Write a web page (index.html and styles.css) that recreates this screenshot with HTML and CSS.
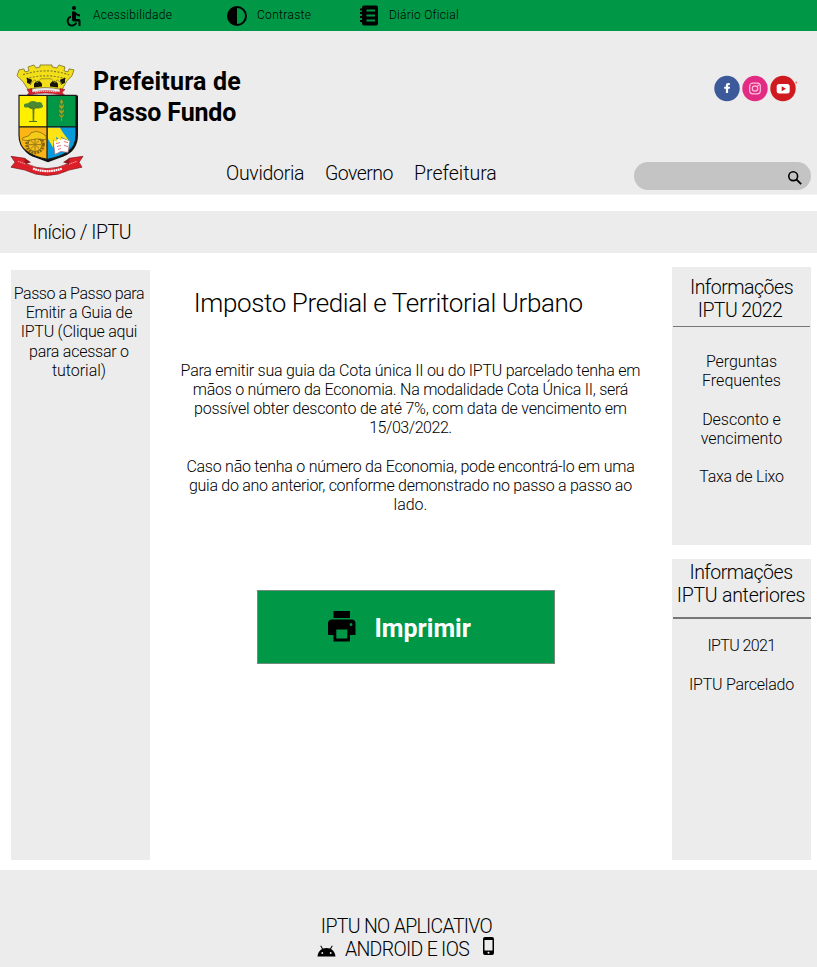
FILE: index.html
```
<!DOCTYPE html>
<html lang="pt-BR">
<head>
<meta charset="utf-8">
<title>IPTU - Prefeitura de Passo Fundo</title>
<link rel="stylesheet" href="styles.css">
</head>
<body>
<div class="topbar">
  <a class="tool tool-access"><svg width="22" height="22" viewBox="0 0 22 22"><circle cx="11" cy="3" r="2"/><path d="M9 6.500h3c1 1.500 2.500 2.800 5 2.900v2c-1.600 0-2.900-.5-4-1.300V14h2.500c1.400 0 2 .8 2 2v5h-2v-4.500H11a2 2 0 0 1-2-2z"/><path d="M8 11.700a4.500 4.500 0 1 0 5.300 6" fill="none" stroke="#000" stroke-width="1.900"/></svg><span>Acessibilidade</span></a>
  <a class="tool tool-contrast"><svg width="22" height="22" viewBox="0 0 22 22"><circle cx="11" cy="11" r="9" fill="none" stroke="#000" stroke-width="2"/><path d="M11 2a9 9 0 0 0 0 18z"/></svg><span>Contraste</span></a>
  <a class="tool tool-diary"><svg width="19" height="21" viewBox="0 0 19 21"><path d="M4 .5h12a2 2 0 0 1 2 2v16a2 2 0 0 1-2 2H4a2 2 0 0 1-2-2V17H0v-2h2v-2H0v-2h2V9H0V7h2V5.500H0v-2h2v-1a2 2 0 0 1 2-2z"/><path d="M6.500 5.500H15M6.500 10.500H15M6.500 15.500H15" stroke="#009846" stroke-width="2"/></svg><span>Diário Oficial</span></a>
</div>

<header class="header">
  <svg class="crest" width="74" height="112" viewBox="0 0 74 114" preserveAspectRatio="none">
    <path d="M9 6l5-1 1 3 4-1-1-4 6-2 2 3 4-1V1h12v2l5 1 2-3 6 2-1 4 4 1 1-3 5 1-2 6-5 5-5 9q-17-4-34 0l-5-8-6-6z" fill="#f2df19" stroke="#79711f" stroke-width=".8"/>
    <path d="M13 11q23-8 46 0M16 15q20-6 40 0" fill="none" stroke="#8a8124" stroke-width="1.200" stroke-dasharray="2 1.500"/>
    <path d="M17 14l5 2-1 5-4-2zM55 14l-5 2 1 5 4-2z" fill="#17150a"/><path d="M24 24v-4q4-6 8 0v3zM40 23v-3q4-6 8 0v4z" fill="#17150a"/><path d="M20 20l5-4 2 3 4-4h10l4 4 2-3 5 4" fill="none" stroke="#a3981e"/>
    <path d="M17 26l5-1v4q14-4 28 0v-4l5 1-3 3 3 3-7-1q-12-3-26 0l-5 1 2-3z" fill="#df202b" stroke="#7d171a" stroke-width=".5"/><path d="M25 28.500q11-2 22 0" stroke="#f8c6c4" fill="none" stroke-width="1.300" stroke-dasharray="1.500 .5"/>
    <path d="M10 32h58v40q0 16-14 22l-16 6-16-6Q10 88 10 72z" fill="#111"/>
    <path d="M9 32h28v32H9z" fill="#fff000"/><path d="M37 32h29v32H37z" fill="#009846"/><path d="M9 64h28v33q-12-2-20-8Q9 84 9 72z" fill="#fbb616"/><path d="M37 64h29v8q0 12-8 17-8 6-21 8z" fill="#079bdc"/>
    <path d="M9 32h57v40q0 12-8 17-8 6-20.500 8-12.500-2-20.500-8Q9 84 9 72zM37 32v65M9 64h57" fill="none" stroke="#191919" stroke-width="1.200"/>
    <path d="M14 43q-1-3 4-3 4-4 9-1 5-1 5 2 3 3-2 4-4 1-6-1-3 3-6 0-4 1-4-1z" fill="#4a8a32"/><path d="M22.500 43h2l-.3 15h-1.500z" fill="#5c7c28"/><path d="M18 43l5 3 6-3M19 58.500h8" stroke="#48702a" fill="none"/>
    <path d="M51.500 38v20" stroke="#9a9a25"/><path d="M51.500 35l2 4-2 2-2-2zM49 40l2.500 3 2.500-3v4l-2.500 2-2.500-2zM49 45l2.500 3 2.500-3v4l-2.500 2-2.500-2zM49 50l2.500 3 2.500-3v3l-2.500 2-2.500-2z" fill="#a0aa28" stroke="#3d6e22" stroke-width=".6"/>
    <circle cx="25" cy="82" r="8.500" fill="none" stroke="#80640e" stroke-width="2.600" stroke-dasharray="2 1"/><circle cx="25" cy="82" r="7" fill="#f0bd1c" stroke="#806313"/><path d="M19 82h12M25 76v12M21 78l8 8M29 78l-8 8" stroke="#a07c14"/><path d="M13 75l6-2 2-3q6-3 10 0l5 3v4q-10-2-19 1l-5-1z" fill="#f5cc18" stroke="#75600f" stroke-width=".7"/>
    <path d="M43 78l8-3 9 3-2 12-7-1-6 3z" fill="#fff" stroke="#a4626a" stroke-width=".7"/><path d="M46 81l4-1M47 84l4-1M48 87l3-1M54 79l4 1M54 83l4 1" stroke="#df7680"/><path d="M38 65h12l3 5 6 8-8-4 0 4-5-4 1 6-4-3 0 8-5-9z" fill="#fee417"/>
    <path d="M1 94l14 2v5q22 11 44 0v-5l14-2-4 6 3 5-13 3q-22 11-44 0l-14-3 4-5z" fill="#dd1f2a" stroke="#7e171b" stroke-width=".7"/><path d="M15 96l6 4-6 2M59 96l-6 4 6 2" fill="#8e191e"/><path d="M23 106.500q14 5 29 0" fill="none" stroke="#fff" stroke-width="2.200" stroke-dasharray="1.800 .5"/><path d="M8 99l8 3M59 102l8-3" stroke="#f3a0a0" stroke-dasharray="1.500 .5"/>
  </svg>
  <div class="header-center">
    <h1><span class="name-a">Prefeitura de</span><br>Passo Fundo</h1>
    <nav><a class="n1">Ouvidoria</a><a class="n2">Governo</a><a class="n3">Prefeitura</a></nav>
  </div>
  <div class="header-right">
    <svg class="social" width="84" height="27" viewBox="0 0 84 27">
      <circle cx="13" cy="13.500" r="12.700" fill="#3c5a9a"/><path d="M11.900 18v-4.200h-1.700v-2.100h1.700v-1.100c0-1.800.9-2.600 2.600-2.600h1.300v2h-.9c-.6 0-.8.300-.8.800v.9h1.900l-.3 2.100h-1.600V18z" fill="#fff"/>
      <circle cx="41" cy="13.500" r="12.700" fill="#e22b82"/><rect x="35.700" y="8.200" width="10.600" height="10.600" rx="3" fill="none" stroke="#ffc0dd" stroke-width="1.200"/><circle cx="41" cy="13.500" r="2.700" fill="none" stroke="#ffc0dd" stroke-width="1.200"/><circle cx="44.200" cy="10.400" r=".8" fill="#ffc0dd"/>
      <circle cx="69" cy="13.500" r="12.700" fill="#cf1b20"/><rect x="62.700" y="9" width="13" height="9.500" rx="2.500" fill="#fff"/><path d="M67.700 11.200v5l4.300-2.500z" fill="#cf1b20"/><circle cx="82.300" cy="7.500" r=".9" fill="#e56a6a"/>
    </svg>
    <div class="search"><svg width="14" height="14" viewBox="0 0 14 14"><circle cx="5.200" cy="5.200" r="4.400" fill="none" stroke="#000" stroke-width="1.600"/><path d="M8.300 8.300l4.900 4.900" stroke="#000" stroke-width="1.900"/></svg></div>
  </div>
</header>

<div class="breadcrumb">Início / IPTU</div>

<main class="main">
  <aside class="guide"><p><span class="s-a">Passo a Passo para</span><br>Emitir a Guia de<br>IPTU (Clique aqui<br>para acessar o<br><span class="s-n">tutorial)</span></p></aside>
  <section class="content">
    <h2>Imposto Predial e Territorial Urbano</h2>
    <p>Para emitir sua guia da Cota única II ou do IPTU parcelado tenha em<br>mãos o número da Economia. Na modalidade Cota Única II, será<br><span class="s-w">possível obter desconto de até 7%, com data de vencimento em</span><br><span class="s-a">15/03/2022.</span></p>
    <p>Caso não tenha o número da Economia, pode encontrá-lo em uma<br><span class="s-g">guia do ano anterior, conforme demonstrado no passo a passo ao</span><br><span class="s-n">lado.</span></p>
    <button class="print"><svg width="28" height="31" viewBox="0 0 28 31"><path d="M5.500 0h16.500v7H5.500zM4 8.500h19.500a4 4 0 0 1 4 4V24H22v6.500H5.500V24H0V12.500a4 4 0 0 1 4-4z"/><path d="M8.300 18.500h11v9h-11z" fill="#009846"/><ellipse cx="23" cy="13.500" rx="1.400" ry="1.600" fill="#009846"/></svg><span>Imprimir</span></button>
  </section>
  <div class="sidebar">
    <aside class="box box-current">
      <h3>Informações<br><span class="h-y">IPTU 2022</span></h3>
      <ul>
        <li><span class="s-n">Perguntas</span><br><span class="s-p">Frequentes</span></li>
        <li><span class="s-n">Desconto e<br>vencimento</span></li>
        <li>Taxa de Lixo</li>
      </ul>
    </aside>
    <aside class="box box-previous">
      <h3>Informações<br><span class="h-w">IPTU anteriores</span></h3>
      <ul>
        <li><span class="s-t">IPTU 2021</span></li>
        <li>IPTU Parcelado</li>
      </ul>
    </aside>
  </div>
</main>

<footer class="footer">
  <div>IPTU NO APLICATIVO</div>
  <div class="apps"><svg class="android" width="19" height="12" viewBox="0 0 19 12"><path d="M.5 11.500C.8 8 2.500 5.300 5 4L3.300 1l.8-.5L5.900 3.600a10 10 0 0 1 7.200 0L14.900.500l.8.5L14 4c2.500 1.300 4.200 4 4.500 7.500z"/><circle cx="5.300" cy="8" r=".9" fill="#ececec"/><circle cx="13.700" cy="8" r=".9" fill="#ececec"/></svg><span>ANDROID E IOS</span><svg class="phone" width="11" height="18" viewBox="0 0 11 18"><rect width="11" height="18" rx="2"/><path d="M1.500 3h8v10.500h-8z" fill="#ececec"/><circle cx="5.500" cy="15.700" r="1" fill="#ececec"/></svg></div>
</footer>
</body>
</html>
```
FILE: styles.css
```
* { box-sizing: border-box; }
body { margin: 0; width: 817px; background: #fff; color: #000; font: 300 16px/19.2px Roboto, sans-serif; letter-spacing: -.25px; }
h1, h2, h3, p, ul { margin: 0; padding: 0; font-weight: 300; }
ul { list-style: none; }
svg { display: block; flex: none; }

.topbar { height: 31px; background: #009846; display: flex; padding-left: 63px; font-size: 12px; line-height: 14px; letter-spacing: .26px; }
.tool { display: flex; align-items: flex-start; }
.tool span { padding-top: 8px; }
.tool-access { width: 163px; gap: 8px; }
.tool-access svg { margin-top: 5px; }
.tool-contrast { width: 134px; gap: 9px; letter-spacing: .33px; }
.tool-contrast svg { margin-top: 5px; }
.tool-diary { gap: 10px; }
.tool-diary svg { margin-top: 5px; }

.header { height: 164px; background: #ececec; display: flex; padding-left: 10px; border-bottom: 1px solid #f4f4f4; }
.crest { margin-top: 33px; }
.header-center { width: 550px; padding: 36px 0 0 9px; }
h1 { font-weight: 700; font-size: 25px; line-height: 30.500px; letter-spacing: -.17px; }
.name-a { letter-spacing: .17px; }
nav { display: flex; padding: 34px 0 0 133px; font-size: 19.500px; line-height: 23px; }
.n1 { width: 99px; letter-spacing: -.3px; }
.n2 { width: 89px; letter-spacing: -.55px; }
.n3 { letter-spacing: 0; }
.header-right { width: 183px; }
.social { margin: 44px 0 0 80px; }
.search { height: 28px; width: 177px; margin: 60px 0 0 .4px; border-radius: 14px; background: #c4c4c4; display: flex; justify-content: flex-end; padding: 9px 9px 0 0; }

.breadcrumb { height: 42px; margin-top: 16px; background: #ececec; padding-left: 32.500px; font-size: 19.500px; line-height: 43px; letter-spacing: -.46px; }

.main { height: 617px; display: flex; }
.guide { width: 139.400px; height: 590px; margin: 17px 0 0 11px; padding: 14px 3.500px 0 0; background: #ececec; text-align: center; letter-spacing: -.24px; white-space: nowrap; }
.s-a { letter-spacing: -.45px; }
.s-n { letter-spacing: -.04px; }
.s-w { letter-spacing: -.2px; }
.s-g { letter-spacing: -.285px; }
.s-p { letter-spacing: .04px; }
.s-t { letter-spacing: -.6px; }
.content { width: 521.600px; padding: 35px 0 0; text-align: center; }
h2 { font-size: 26px; line-height: 31px; letter-spacing: -.37px; padding-right: 46px; margin-bottom: 41.500px; }
.content p { margin-bottom: 19.200px; padding-right: 1.500px; }
.print { width: 298.400px; height: 74px; margin: 75.500px 0 0 106.600px; padding: 0 0 0 70px; border: 1px solid #738c7e; background: #009846; color: #fff; display: flex; align-items: center; gap: 18.500px; font: 700 25px/30px Roboto, sans-serif; letter-spacing: .02px; }
.print span { padding-top: 5px; }

.sidebar { width: 139px; padding-top: 14px; text-align: center; }
.box { background: #ececec; }
.box-current { height: 278.400px; padding-top: 9px; margin-bottom: 13.600px; }
.box-previous { height: 301px; padding-top: 2px; }
h3 { font-size: 19.500px; line-height: 23px; letter-spacing: -.5px; margin: 0 1px; white-space: nowrap; border-bottom: 1.500px solid #777; }
.box-current h3 { height: 51px; }
.box-previous h3 { height: 58px; border-bottom-width: 2px; margin-right: 0; padding-right: 2px; }
.h-y { letter-spacing: -.6px; padding-right: 3px; }
.h-w { letter-spacing: -.25px; }
.box-current ul { padding-top: 25px; }
.box-previous ul { padding-top: 17.500px; }
li { margin-bottom: 19.200px; letter-spacing: -.23px; }

.footer { height: 97px; background: #ececec; padding-top: 45px; text-align: center; font-size: 19.500px; line-height: 23px; letter-spacing: -.68px; padding-right: 4px; }
.apps { display: flex; justify-content: center; padding-right: 2px; }
.android { margin: 7px 9px 0 0; }
.phone { margin: -1px 0 0 14px; }
```
